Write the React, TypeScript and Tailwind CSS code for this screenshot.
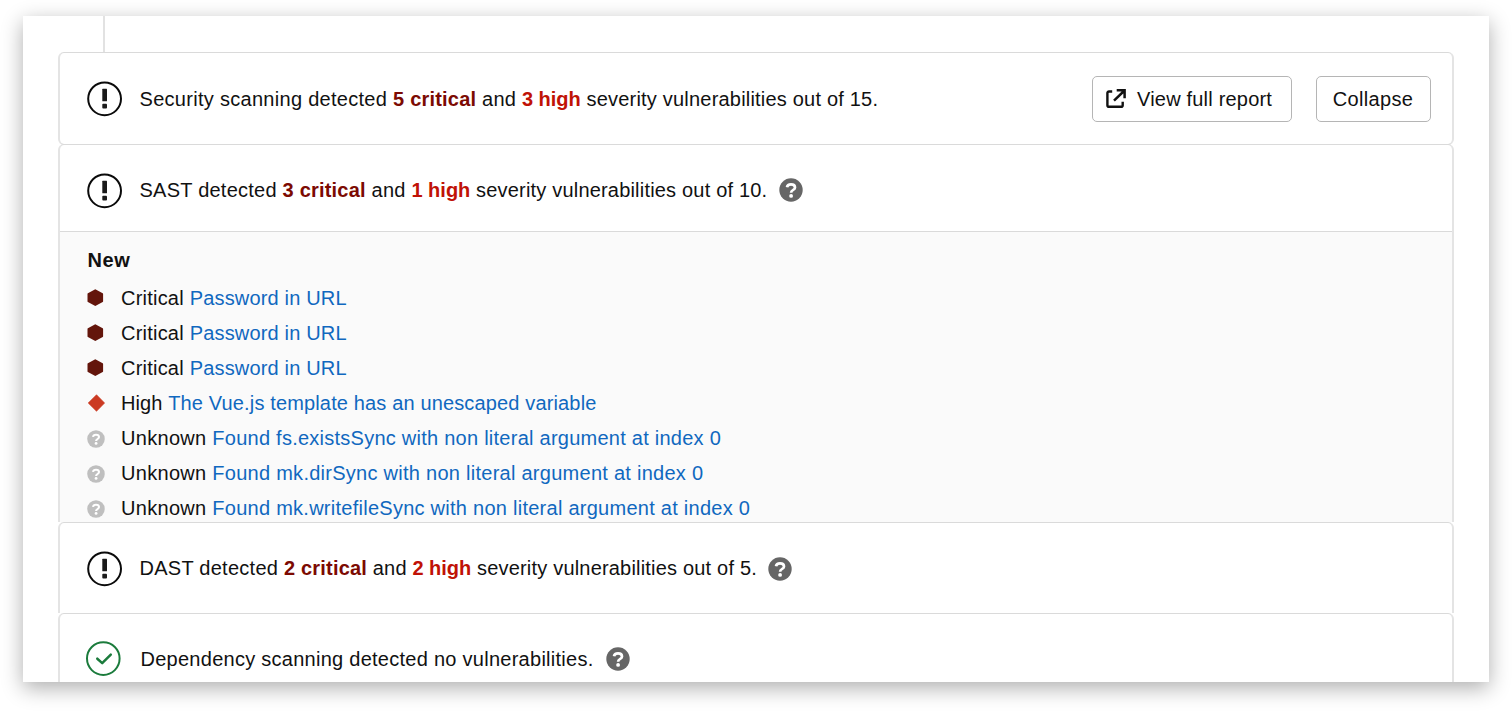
import React from "react";

type Part = { text: string; tone?: "critical" | "high"; track?: string };

function AlertIcon() {
  return (
    <svg width="36" height="36" viewBox="0 0 36 36" className="shrink-0">
      <circle cx="17.6" cy="17.8" r="16.4" fill="none" stroke="#0a0a0a" strokeWidth="2" />
      <rect x="15.3" y="7.8" width="4.7" height="12.4" rx="0.5" fill="#1a1a1a" />
      <rect x="15.3" y="22.8" width="4.7" height="4.6" rx="0.9" fill="#1a1a1a" />
    </svg>
  );
}

function SuccessIcon() {
  return (
    <svg width="36" height="36" viewBox="0 0 36 36" className="shrink-0">
      <circle cx="17.3" cy="17.6" r="16.3" fill="none" stroke="#1b7b3c" strokeWidth="2" />
      <path d="M11.300 17.700l4.900 4.400 8.600-8.500" fill="none" stroke="#1b7b3c" strokeWidth="2.500" strokeLinecap="round" strokeLinejoin="round" />
    </svg>
  );
}

function QuestionIcon({ className, size }: { className: string; size: number }) {
  return (
    <svg width={size} height={size} viewBox="0 0 24 24" className={className}>
      <circle cx="12" cy="12" r="11.7" fill="currentColor" />
      <path d="M8 9.300C8.300 7.200 9.800 6.300 12 6.300c2.200 0 4 1.100 4 3.100 0 2.600-3.900 2.600-3.900 5.300" fill="none" stroke="#fff" strokeWidth="2.700" />
      <circle cx="12.100" cy="17.900" r="1.900" fill="#fff" />
    </svg>
  );
}

function ExternalIcon() {
  return (
    <svg width="20" height="20" viewBox="0 0 20 20" className="shrink-0">
      <path d="M6.200 2.500H3a1.600 1.600 0 0 0-1.600 1.600v12.100a1.600 1.600 0 0 0 1.600 1.600h12.100a1.600 1.600 0 0 0 1.600-1.600v-3.400" fill="none" stroke="#111" strokeWidth="2.400" />
      <path d="M10.700 1.300h7.900V9.200M18 2L8 11.600" fill="none" stroke="#111" strokeWidth="2.500" />
    </svg>
  );
}

function Hexagon() {
  return (
    <svg width="18" height="18" viewBox="0 0 18 18">
      <path d="M8.300 0.300l7.400 3.900a.8.8 0 0 1 .4.700v7.400a.8.8 0 0 1-.4.700l-7.400 3.900-7.400-3.900a.8.8 0 0 1-.4-.7V4.900a.8.8 0 0 1 .4-.7z" fill="#63150b" />
    </svg>
  );
}

function Diamond() {
  return (
    <svg width="18" height="18" viewBox="0 0 18 18">
      <path d="M9.500 .7l8.100 8.300-8.100 8.300L1.200 9z" fill="#cb3a22" stroke="#cb3a22" strokeWidth=".6" strokeLinejoin="round" />
    </svg>
  );
}

function Sentence({ parts, className }: { parts: Part[]; className: string }) {
  return (
    <p className={`whitespace-pre ${className}`}>
      {parts.map((p, i) =>
        p.tone ? (
          <strong
            key={i}
            className={p.tone === "critical" ? "font-bold tracking-[0.2px] text-[#7c0a02]" : "font-bold tracking-[0px] text-[#c01206]"}
          >
            {p.text}
          </strong>
        ) : (
          <span key={i} className={p.track ?? "tracking-[0.24px]"}>
            {p.text}
          </span>
        ),
      )}
    </p>
  );
}

const findings = [
  { level: "Critical", title: "Password in URL", levelTrack: "tracking-[0.22px]", track: "tracking-[0.17px]" },
  { level: "Critical", title: "Password in URL", levelTrack: "tracking-[0.22px]", track: "tracking-[0.17px]" },
  { level: "Critical", title: "Password in URL", levelTrack: "tracking-[0.22px]", track: "tracking-[0.17px]" },
  { level: "High", title: "The Vue.js template has an unescaped variable", levelTrack: "tracking-[0.1px]", track: "tracking-[0.145px]" },
  { level: "Unknown", title: "Found fs.existsSync with non literal argument at index 0", levelTrack: "tracking-[0.3px]", track: "tracking-[0.25px]" },
  { level: "Unknown", title: "Found mk.dirSync with non literal argument at index 0", levelTrack: "tracking-[0.3px]", track: "tracking-[0.265px]" },
  { level: "Unknown", title: "Found mk.writefileSync with non literal argument at index 0", levelTrack: "tracking-[0.3px]", track: "tracking-[0.26px]" },
];

export default function App() {
  return (
    <div className="h-[711px] overflow-hidden bg-white px-[23px] pt-4 font-['Liberation_Sans',Arial,sans-serif] text-[20px] leading-[35px] text-[#111]">
      <main className="h-[666px] shadow-[0_6px_20px_rgba(0,0,0,0.32)]">
        <div className="h-full overflow-hidden bg-white pr-[35px] pl-[35px]">
          <div className="ml-[45px] h-[36px] w-[2px] bg-[#e2e2e2]" />
          <section className="flex h-[93px] items-center rounded-[6px] border border-x-2 border-x-[#e4e4e4] border-y-[#dadada] pr-[21px] pl-[27px]">
            <AlertIcon />
            <Sentence
              className="mt-px ml-[16.5px] grow"
              parts={[
                { text: "Security scanning detected ", track: "tracking-[0.29px]" },
                { text: "5 critical", tone: "critical" },
                { text: " and " },
                { text: "3 high", tone: "high" },
                { text: " severity vulnerabilities out of 15.", track: "tracking-[0.2px]" },
              ]}
            />
            <button className="flex h-[46px] w-[200px] items-center rounded-[5px] border border-[#b5b5b5] pl-[13px]">
              <ExternalIcon />
              <span className="mt-px ml-[11px] whitespace-nowrap tracking-[0.2px]">View full report</span>
            </button>
            <button className="ml-6 h-[46px] w-[115px] rounded-[5px] border border-[#b5b5b5] pt-px pr-px text-center tracking-[0.35px]">Collapse</button>
          </section>
          <section className="-mt-px rounded-t-[6px] border border-x-2 border-b-0 border-x-[#e4e4e4] border-t-[#dadada]">
            <div className="flex h-[86px] items-center pt-[5px] pl-[27px]">
              <AlertIcon />
              <Sentence
                className="ml-[16.5px]"
                parts={[
                  { text: "SAST detected " },
                  { text: "3 critical", tone: "critical" },
                  { text: " and " },
                  { text: "1 high", tone: "high" },
                  { text: " severity vulnerabilities out of 10.", track: "tracking-[0.19px]" },
                ]}
              />
              <QuestionIcon size={24} className="mb-px ml-[11.5px] text-[#666]" />
            </div>
            <div className="h-[291px] border-t border-[#dadada] bg-[#fafafa] pt-[11px] pl-[27px]">
              <h2 className="pl-[0.5px] font-bold tracking-[0.6px]">New</h2>
              <ul className="mt-[3px]">
                {findings.map((f, i) => (
                  <li key={i} className="flex h-[35px] items-center">
                    <span className="flex w-[34px] shrink-0 pb-px">
                      {f.level === "Critical" ? (
                        <Hexagon />
                      ) : f.level === "High" ? (
                        <Diamond />
                      ) : (
                        <QuestionIcon size={18} className="mt-px text-[#bfbfbf]" />
                      )}
                    </span>
                    <span className={`whitespace-pre ${f.levelTrack}`}>{f.level} </span>
                    <a className={`whitespace-nowrap text-[#1068bf] ${f.track}`}>{f.title}</a>
                  </li>
                ))}
              </ul>
            </div>
          </section>
          <section className="flex h-[91px] items-center rounded-t-[6px] border border-x-2 border-b-0 border-x-[#e4e4e4] border-t-[#dadada] pt-px pl-[27px]">
            <AlertIcon />
            <Sentence
              className="ml-[16.5px]"
              parts={[
                { text: "DAST detected ", track: "tracking-[0.26px]" },
                { text: "2 critical", tone: "critical" },
                { text: " and ", track: "tracking-[0.15px]" },
                { text: "2 high", tone: "high" },
                { text: " severity vulnerabilities out of 5.", track: "tracking-[0.19px]" },
              ]}
            />
            <QuestionIcon size={24} className="ml-[11.5px] text-[#666]" />
          </section>
          <section className="flex h-[91px] items-center rounded-t-[6px] border border-x-2 border-b-0 border-x-[#e4e4e4] border-t-[#dadada] pl-[26px]">
            <SuccessIcon />
            <Sentence
              className="ml-[18.5px]"
              parts={[{ text: "Dependency scanning detected no vulnerabilities.", track: "tracking-[0.265px]" }]}
            />
            <QuestionIcon size={24} className="ml-[12px] text-[#666]" />
          </section>
        </div>
      </main>
    </div>
  );
}
